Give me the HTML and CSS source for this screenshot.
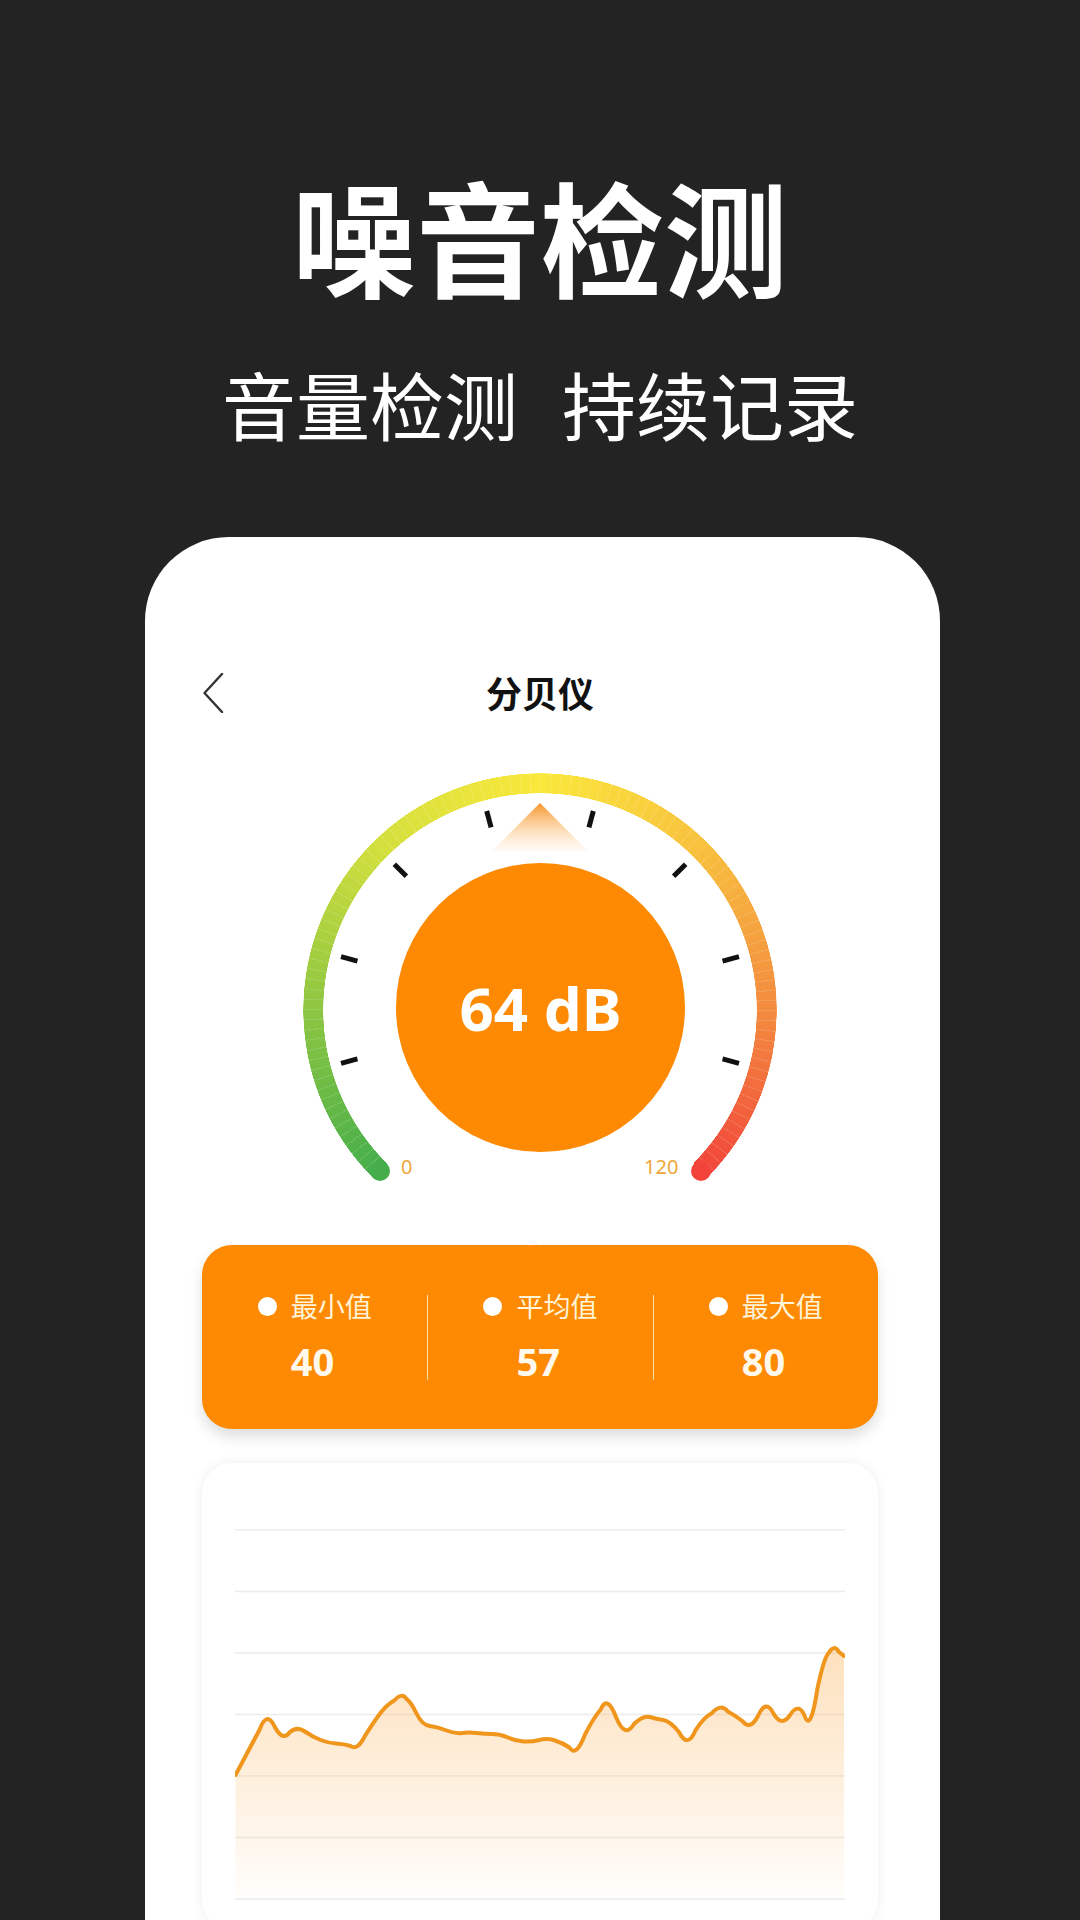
FILE: index.html
```html
<!DOCTYPE html>
<html lang="zh-CN">
<head>
<meta charset="utf-8">
<title>噪音检测</title>
<link rel="stylesheet" href="styles.css">
</head>
<body>
<header class="hero">
  <h1 class="hero-title">噪音检测</h1>
  <p class="hero-sub"><span>音量检测</span><span>持续记录</span></p>
</header>
<main class="phone">
  <div class="nav">
    <svg class="back" viewBox="0 0 22 40" width="22" height="40"><path d="M20 1 L2.5 20 L20 39" fill="none" stroke="#333" stroke-width="2.4" stroke-linecap="round" stroke-linejoin="round"/></svg>
    <h2 class="nav-title">分贝仪</h2>
  </div>
  <div class="gauge">
    <div class="ring"></div>
    <span class="cap cap-start"></span>
    <span class="cap cap-end"></span>
    <svg class="marks" viewBox="0 0 474 474" width="474" height="474">
      <defs>
        <linearGradient id="ptr" x1="0" y1="0" x2="0" y2="1">
          <stop offset="0" stop-color="#f6952a"/>
          <stop offset="1" stop-color="#fcd8a6" stop-opacity="0.12"/>
        </linearGradient>
      </defs>
      <polygon points="237,30 189,78 285,78" fill="url(#ptr)"/>
      <g transform="translate(237 237)" stroke="#111" stroke-width="5">
        <line x1="0" y1="-189" x2="0" y2="-206" transform="rotate(-105)"/>
        <line x1="0" y1="-189" x2="0" y2="-206" transform="rotate(-75)"/>
        <line x1="0" y1="-189" x2="0" y2="-206" transform="rotate(-45)"/>
        <line x1="0" y1="-189" x2="0" y2="-206" transform="rotate(-15)"/>
        <line x1="0" y1="-189" x2="0" y2="-206" transform="rotate(15)"/>
        <line x1="0" y1="-189" x2="0" y2="-206" transform="rotate(45)"/>
        <line x1="0" y1="-189" x2="0" y2="-206" transform="rotate(75)"/>
        <line x1="0" y1="-189" x2="0" y2="-206" transform="rotate(105)"/>
      </g>
    </svg>
    <div class="dial">64 dB</div>
    <span class="lbl lbl-min">0</span>
    <span class="lbl lbl-max">120</span>
  </div>
  <section class="stats">
    <div class="stat">
      <div class="stat-inner">
        <span class="dot"></span><span class="stat-label">最小值</span>
        <span class="stat-value">40</span>
      </div>
    </div>
    <div class="stat">
      <div class="stat-inner">
        <span class="dot"></span><span class="stat-label">平均值</span>
        <span class="stat-value">57</span>
      </div>
    </div>
    <div class="stat">
      <div class="stat-inner">
        <span class="dot"></span><span class="stat-label">最大值</span>
        <span class="stat-value">80</span>
      </div>
    </div>
  </section>
  <section class="chart">
    <svg class="plot" viewBox="0 0 610 372" width="610" height="372">
      <defs>
        <linearGradient id="area" gradientUnits="userSpaceOnUse" x1="0" y1="119" x2="0" y2="372">
          <stop offset="0" stop-color="#fbb35a" stop-opacity="0.4"/>
          <stop offset="1" stop-color="#fbb35a" stop-opacity="0.02"/>
        </linearGradient>
      </defs>
      <g stroke="#ececec" stroke-width="1.5">
        <line x1="0" y1="1" x2="610" y2="1"/>
        <line x1="0" y1="62.5" x2="610" y2="62.5"/>
        <line x1="0" y1="124" x2="610" y2="124"/>
        <line x1="0" y1="185.5" x2="610" y2="185.5"/>
        <line x1="0" y1="247" x2="610" y2="247"/>
        <line x1="0" y1="308.5" x2="610" y2="308.5"/>
        <line x1="0" y1="370" x2="610" y2="370"/>
      </g>
      <path fill="url(#area)" d="M0.5,246 L9,230 Q17.5,214 24.65,200.5 Q31.8,181 39.85,198 Q47.9,213 54.95,203 Q62,197 69.9,202.5 Q77.8,208 85.6,211 Q93.4,214 101.2,214.5 Q109,215 115.7,217 Q122.4,222 130.2,206.5 Q138,194 144.7,185 Q151.4,176 159.2,171.5 Q167,163 171.5,170 Q176,173 181.5,184.5 Q187,196 194.9,197 Q202.8,198 211.7,201.5 Q220.6,205 227.3,204 Q234,203 241.8,204 Q249.6,205 257.3,205 Q265,205 273,208.5 Q281,212 288.75,212.5 Q296.5,213 304.25,211 Q312,209 319.9,211.5 Q327.8,214 334.4,218.5 Q341,229 350,205.5 Q359,188 365.7,180.5 Q372.4,165 381.2,188.5 Q390,210 399,195 Q408,186 414.75,188 Q421.5,190 428.25,191 Q435,192 443.9,203 Q452.8,220 460.4,201.5 Q468,189 477,184 Q486,174 492.8,182.5 Q499.6,186 507.3,192 Q515,202 523,187 Q531,169 538.75,185 Q546.5,198 554.75,186.5 Q563,173 569.25,186 Q575.5,205 582.25,160.5 Q589,128 594,123.5 Q599,115 604,123 L609,127 L609,372 L0.5,372 Z"/>
      <path fill="none" stroke="#f0961c" stroke-width="4" stroke-linejoin="round" stroke-linecap="round" d="M0.5,246 L9,230 Q17.5,214 24.65,200.5 Q31.8,181 39.85,198 Q47.9,213 54.95,203 Q62,197 69.9,202.5 Q77.8,208 85.6,211 Q93.4,214 101.2,214.5 Q109,215 115.7,217 Q122.4,222 130.2,206.5 Q138,194 144.7,185 Q151.4,176 159.2,171.5 Q167,163 171.5,170 Q176,173 181.5,184.5 Q187,196 194.9,197 Q202.8,198 211.7,201.5 Q220.6,205 227.3,204 Q234,203 241.8,204 Q249.6,205 257.3,205 Q265,205 273,208.5 Q281,212 288.75,212.5 Q296.5,213 304.25,211 Q312,209 319.9,211.5 Q327.8,214 334.4,218.5 Q341,229 350,205.5 Q359,188 365.7,180.5 Q372.4,165 381.2,188.5 Q390,210 399,195 Q408,186 414.75,188 Q421.5,190 428.25,191 Q435,192 443.9,203 Q452.8,220 460.4,201.5 Q468,189 477,184 Q486,174 492.8,182.5 Q499.6,186 507.3,192 Q515,202 523,187 Q531,169 538.75,185 Q546.5,198 554.75,186.5 Q563,173 569.25,186 Q575.5,205 582.25,160.5 Q589,128 594,123.5 Q599,115 604,123 L609,127"/>
    </svg>
  </section>
</main>
</body>
</html>
```

FILE: styles.css
```css
* { box-sizing: border-box; }

body {
  margin: 0;
  width: 1080px;
  height: 1920px;
  overflow: hidden;
  background: #232323;
  font-family: "Noto Sans CJK SC", "Noto Sans", sans-serif;
}

.hero {
  padding-top: 172px;
  text-align: center;
  color: #fff;
}

.hero-title {
  margin: 0;
  font-size: 124px;
  line-height: 124px;
  font-weight: 700;
}

.hero-sub {
  margin: 70px 0 0;
  display: flex;
  justify-content: center;
  gap: 44px;
  font-size: 74px;
  line-height: 74px;
  font-weight: 400;
}

.phone {
  margin: 97px 0 0 145px;
  width: 795px;
  height: 1500px;
  padding: 125px 62px 0 57px;
  background: #fff;
  border-radius: 84px 84px 0 0;
}

.nav {
  position: relative;
  height: 60px;
}

.back {
  position: absolute;
  left: 0;
  top: 11px;
}

.nav-title {
  margin: 0;
  text-align: center;
  font-size: 36px;
  line-height: 60px;
  font-weight: 700;
  color: #111;
}

.gauge {
  position: relative;
  width: 474px;
  height: 420px;
  margin: 51px auto 0;
}

.ring {
  position: absolute;
  left: 0;
  top: 0;
  width: 474px;
  height: 474px;
  border-radius: 50%;
  background:
    repeating-conic-gradient(from 225deg, rgba(255,255,255,0.12) 0deg 0.3deg, transparent 0.3deg 2.5deg),
    conic-gradient(from 225deg, #45ae4b 0deg, #8dc641 45deg, #d2df3d 90deg, #fae83b 135deg, #f8c03e 180deg, #f38b3f 225deg, #f2443a 270deg, transparent 270deg);
  -webkit-mask: radial-gradient(closest-side, transparent calc(100% - 20.5px), #000 calc(100% - 20px), #000 calc(100% - 0.5px), transparent 100%);
  mask: radial-gradient(closest-side, transparent calc(100% - 20.5px), #000 calc(100% - 20px), #000 calc(100% - 0.5px), transparent 100%);
}

.cap {
  position: absolute;
  top: 387.5px;
  width: 20px;
  height: 20px;
  border-radius: 50%;
}

.cap-start { left: 66.5px; background: #45ae4b; }
.cap-end { left: 387.5px; background: #f2443a; }

.marks {
  position: absolute;
  left: 0;
  top: 0;
}

.dial {
  position: absolute;
  left: 93px;
  top: 90px;
  width: 289px;
  height: 289px;
  border-radius: 50%;
  background: #fd8a02;
  display: flex;
  align-items: center;
  justify-content: center;
  color: #fff;
  font-family: "Noto Sans", sans-serif;
  font-weight: 700;
  font-size: 60px;
}

.lbl {
  position: absolute;
  top: 384px;
  font-family: "Noto Sans", sans-serif;
  font-size: 20px;
  line-height: 20px;
  color: #eea73a;
}

.lbl-min { left: 98px; }
.lbl-max { left: 341px; }

.stats {
  margin-top: 52px;
  height: 184px;
  border-radius: 30px;
  background: #fd8a02;
  box-shadow: 0 8px 14px rgba(0, 0, 0, 0.13);
  display: grid;
  grid-template-columns: repeat(3, 1fr);
  align-items: center;
}

.stat {
  height: 85px;
  display: flex;
  justify-content: center;
  align-items: center;
}

.stat + .stat {
  border-left: 1.5px solid rgba(255, 238, 200, 0.85);
}

.stat-inner {
  display: grid;
  grid-template-columns: 20px auto;
  column-gap: 13px;
  row-gap: 18px;
  align-items: center;
}

.dot {
  width: 19px;
  height: 19px;
  border-radius: 50%;
  background: #fff;
}

.stat-label {
  font-size: 27px;
  line-height: 30px;
  color: #fff3d8;
}

.stat-value {
  grid-column: 2;
  font-family: "Noto Sans", sans-serif;
  font-weight: 700;
  font-size: 38px;
  line-height: 44px;
  color: #fff8ec;
}

.chart {
  margin-top: 34px;
  height: 467px;
  padding: 66px 33px 0;
  border-radius: 30px;
  background: #fff;
  box-shadow: 0 0 12px rgba(0, 0, 0, 0.07);
}

.plot {
  display: block;
}
```
